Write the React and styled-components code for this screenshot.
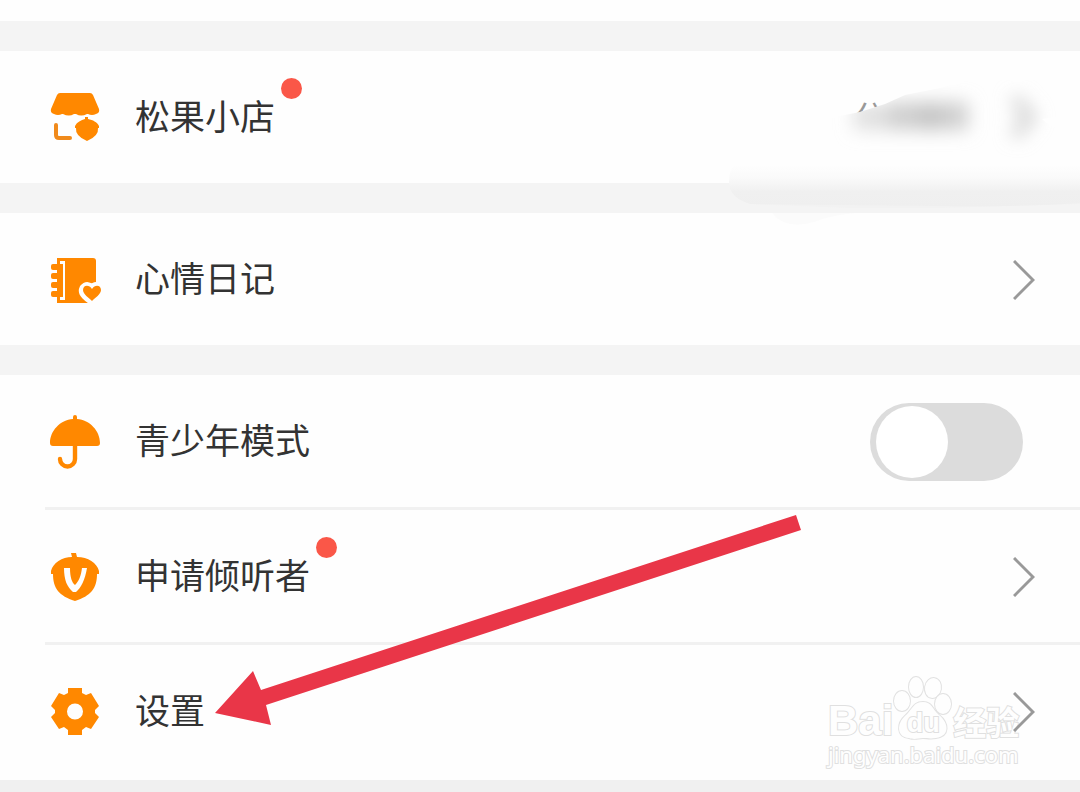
import React from 'react'
import styled, { createGlobalStyle } from 'styled-components'

const GlobalStyle = createGlobalStyle`
  * {
    box-sizing: border-box;
  }
  body {
    margin: 0;
    background: #f0f0f0;
    font-family: 'Noto Sans CJK SC', 'Noto Sans', sans-serif;
  }
`

const Page = styled.main`
  position: relative;
  overflow: hidden;
`

const TopStrip = styled.div`
  height: 21px;
  background: #fefefe;
`

const Group = styled.section`
  border-top: 30px solid #f4f4f4;
  background: #fefefe;
`

const RowBox = styled.div`
  position: relative;
  display: flex;
  align-items: center;
  height: 132px;
  padding: 0 45px;
  color: #333;
  text-decoration: none;
`

const Divider = styled.hr`
  height: 3px;
  margin: 0 0 0 45px;
  border: 0;
  background: ${({ $hidden }) => ($hidden ? 'transparent' : '#f1f1f1')};
`

const Icon = styled.svg`
  flex: none;
  width: 60px;
  height: 60px;
  margin-right: 30px;
  fill: #ff8800;
`

const Label = styled.span`
  position: relative;
  padding-bottom: 4px;
  font-size: 35px;
  font-weight: 400;
  line-height: 50px;
`

const Dot = styled.i`
  position: absolute;
  left: 100%;
  top: -12px;
  width: 21px;
  height: 21px;
  margin-left: 6px;
  border-radius: 50%;
  background: #fa5748;
`

const Chevron = styled.svg`
  position: relative;
  z-index: 2;
  width: 22px;
  height: 40px;
  margin: 2px 0 0 auto;
  fill: none;
  stroke: #999;
  stroke-width: 3px;
`

const Switch = styled.input`
  appearance: none;
  width: 153px;
  height: 78px;
  margin: 2px 12px 0 auto;
  padding: 3px 6px;
  border-radius: 39px;
  background: #dcdcdc;
  cursor: pointer;
  &::before {
    content: '';
    display: block;
    width: 72px;
    height: 72px;
    border-radius: 50%;
    background: #fff;
  }
  &:checked {
    background: #ff8800;
  }
  &:checked::before {
    margin-left: auto;
  }
`

const Smudge = styled.svg`
  position: absolute;
  z-index: 1;
  top: 19px;
  right: 0;
  width: 360px;
  height: 170px;
  pointer-events: none;
`

const Arrow = styled.svg`
  position: absolute;
  z-index: 3;
  left: 215px;
  top: 515px;
  width: 586px;
  height: 211px;
  fill: #e93648;
  pointer-events: none;
`

const Watermark = styled.div`
  position: absolute;
  right: 58px;
  top: 30px;
  width: 194px;
  color: #fefefe;
  -webkit-text-stroke: 2px #e0e0e0;
  paint-order: stroke fill;
  white-space: nowrap;
`

const Brand = styled.div`
  display: flex;
  align-items: flex-end;
  height: 64px;
  font-family: 'Liberation Sans', 'Noto Sans CJK SC', sans-serif;
  font-size: 42px;
  font-weight: 700;
  line-height: 36px;
`

const Paw = styled.span`
  position: relative;
  width: 60px;
  height: 64px;
  svg {
    display: block;
    overflow: visible;
    fill: #fefefe;
    stroke: #e2e2e2;
    stroke-width: 2px;
  }
`

const PawText = styled.span`
  position: absolute;
  left: 0;
  right: 0;
  top: 34px;
  text-align: center;
  font-size: 27px;
  line-height: 28px;
`

const BrandCn = styled.span`
  font-family: 'Noto Sans CJK SC', sans-serif;
  font-size: 33px;
`

const Site = styled.div`
  font-family: 'Noto Sans', sans-serif;
  font-size: 22px;
  line-height: 30px;
`

const ShopIcon = () => (
  <Icon viewBox="0 0 60 60" aria-hidden="true">
    <path d="M15 6H45Q47 6 48 8L54 22Q55 26 51 27Q47 29 43 27H42Q36 30 31 27H29Q24 30 18 27H17Q13 29 9 27Q5 26 6 22L12 8Q13 6 15 6Z" />
    <path d="M11 38V48Q11 51 14 51H25" fill="none" stroke="#f08a1c" strokeWidth="4" strokeLinecap="round" />
    <path d="M40 30H43V32C48 33 52 35 54 39V41H53Q54 49 42 54Q30 49 31 41H30V39C32 35 36 33 40 32Z" />
  </Icon>
)

const DiaryIcon = () => (
  <Icon viewBox="0 0 60 60" aria-hidden="true">
    <path d="M12 9H48Q51 9 51 12V54H12Z" />
    <path d="M15 12H20V51H15V48H18V15H15Z" fill="#fefefe" />
    {[15, 24, 33, 42].map((y) => (
      <rect key={y} x="6" y={y} width="12" height="6" rx="2" />
    ))}
    <path
      d="M47 39Q42 34 38 39Q36 43 40 47Q45 52 47 52Q49 52 53 47Q57 43 55 39Q51 34 47 39Z"
      fill="#fefefe"
      stroke="#fefefe"
      strokeWidth="7"
      strokeLinejoin="round"
    />
    <path d="M47 40C44 35 38 36 38 41C38 45 44 49 47 52C50 49 56 45 56 41C56 36 50 35 47 40Z" />
  </Icon>
)

const UmbrellaIcon = () => (
  <Icon viewBox="0 0 60 60" aria-hidden="true">
    <path d="M28 8V6Q28 4 30 4Q32 4 32 6V8C45 9 55 20 55 32Q55 35 52 35H8Q5 35 5 32C5 20 15 9 28 8Z" />
    <path d="M30 34V48A7.5 7.5 0 0 1 15 48" fill="none" stroke="#ff8800" strokeWidth="4.4" strokeLinecap="round" />
  </Icon>
)

const AcornIcon = () => (
  <Icon viewBox="0 0 60 60" aria-hidden="true">
    <path d="M26 7H31L32 11C43 11 52 17 54 25V28H52C52 42 46 50 30 55C14 50 8 42 8 28H6V25C8 17 17 11 27 11Z" />
    <path d="M19 22H25C25 31 27 37 30 39C34 35 36 30 37 22H42C40 34 36 42 31 46H28C22 41 19 34 19 22Z" fill="#fefefe" />
  </Icon>
)

const GearIcon = () => (
  <Icon viewBox="0 0 60 60" aria-hidden="true">
    <path
      fillRule="evenodd"
      d="M23 7H37V12L41 14L46 12L54 25L50 29V32L54 36L46 48L41 46L37 49V54H23V49L19 46L14 48L6 36L10 32V29L6 25L14 12L19 14L23 12ZM30 22.5A8 8 0 1 0 30 38.5A8 8 0 1 0 30 22.5Z"
    />
  </Icon>
)

const Next = () => (
  <Chevron viewBox="0 0 22 40" aria-hidden="true">
    <path d="M1 1L20 20L1 39" />
  </Chevron>
)

// the blurred-out value on the shop row and the smear below it
const BlurredValue = () => (
  <Smudge viewBox="0 0 360 170" aria-hidden="true">
    <defs>
      <filter id="soft" filterUnits="userSpaceOnUse" x="90" y="-10" width="270" height="120">
        <feGaussianBlur stdDeviation="9" />
      </filter>
      <clipPath id="above">
        <path d="M120 20H165V34L140 42L120 46Z" />
      </clipPath>
      <clipPath id="below">
        <path d="M110 48L140 42L165 34L185 25L220 18L250 10H340V46L322 49L328 54L340 60V90H110Z" />
      </clipPath>
      <linearGradient id="smear" x1="0" y1="0" x2="0" y2="1">
        <stop offset="0" stopColor="#fefefe" />
        <stop offset="0.3" stopColor="#fafafa" />
        <stop offset="0.65" stopColor="#f0f0f0" />
        <stop offset="1" stopColor="#efefef" />
      </linearGradient>
    </defs>
    <text x="134" y="58" fontSize="31" fontWeight="400" fill="#999" clipPath="url(#above)">分</text>
    <g clipPath="url(#below)">
      <g filter="url(#soft)">
        <rect x="134" y="34" width="114" height="26" fill="#e0e0e0" />
        <rect x="168" y="32" width="80" height="28" fill="#cfcfcf" />
        <rect x="200" y="34" width="20" height="26" fill="#c4c4c4" />
      </g>
      <path d="M294 28L310 47L294 66" fill="none" stroke="#d2d2d2" strokeWidth="11" filter="url(#soft)" />
    </g>
    <path d="M52 143H136Q112 145 94 152Q65 160 52 143Z" fill="#fbfbfb" />
    <path d="M30 134L130 138L220 138L360 134V130H30Z" fill="#f2f2f2" />
    <path d="M15 95H360V133Q300 137 220 136L30 134Q10 128 9 113Q9 98 15 95Z" fill="url(#smear)" />
  </Smudge>
)

const BaiduMark = () => (
  <Watermark>
    <Brand>
      <span>Bai</span>
      <Paw>
        <svg width="60" height="64" viewBox="0 0 60 64" aria-hidden="true">
          <ellipse cx="9" cy="26" rx="8" ry="10" />
          <ellipse cx="23" cy="12" rx="7" ry="10" />
          <ellipse cx="40" cy="13" rx="8" ry="10" transform="rotate(10 40 13)" />
          <ellipse cx="50" cy="29" rx="8" ry="10" />
          <path d="M30 27C39 27 39 34 46 40C56 48 57 61 43 63C37 64 34 63 30 63C25 63 22 65 16 63C3 62 4 48 12 41C20 34 20 27 30 27Z" />
        </svg>
        <PawText>du</PawText>
      </Paw>
      <BrandCn>经验</BrandCn>
    </Brand>
    <Site>jingyan.baidu.com</Site>
  </Watermark>
)

export default () => (
  <>
    <GlobalStyle />
    <Page>
      <TopStrip />
      <Group>
        <RowBox as="a" href="#shop">
          <ShopIcon />
          <Label>松果小店<Dot /></Label>
          <BlurredValue />
        </RowBox>
      </Group>
      <Group>
        <RowBox as="a" href="#diary">
          <DiaryIcon />
          <Label>心情日记</Label>
          <Next />
        </RowBox>
      </Group>
      <Group>
        <RowBox as="label" htmlFor="teen-mode">
          <UmbrellaIcon />
          <Label>青少年模式</Label>
          <Switch id="teen-mode" type="checkbox" role="switch" />
        </RowBox>
        <Divider />
        <RowBox as="a" href="#listener">
          <AcornIcon />
          <Label>申请倾听者<Dot /></Label>
          <Next />
        </RowBox>
        <Divider />
        <RowBox as="a" href="#settings">
          <GearIcon />
          <Label>设置</Label>
          <BaiduMark />
          <Next />
        </RowBox>
        <Divider $hidden />
      </Group>
      <Arrow viewBox="0 0 586 211" aria-hidden="true">
        <path d="M0 198L38 156L46 175L581 0L586 15L51 190L56 210Z" />
      </Arrow>
    </Page>
  </>
)
